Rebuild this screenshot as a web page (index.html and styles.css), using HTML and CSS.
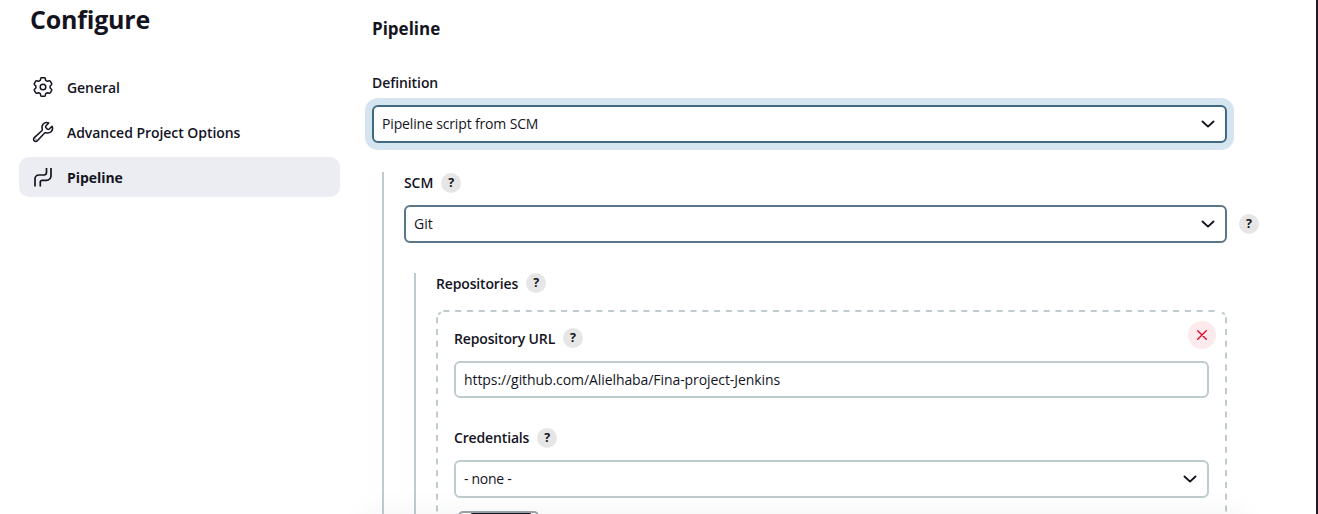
FILE: index.html
```html
<!DOCTYPE html>
<html lang="en">
<head>
<meta charset="utf-8">
<title>Configure</title>
<link rel="stylesheet" href="styles.css">
</head>
<body>
<div class="page">
  <aside class="sidebar">
    <h1 class="title">Configure</h1>
    <nav class="tasks">
      <a class="task">
        <svg class="icon" viewBox="-10 -10 20 20"><path class="gear" d="M-1.5-9.2H1.5Q2.1-9.2 2.3-8.5L2.7-6.7 4.4-5.7 6.2-6.3Q6.9-6.4 7.2-5.9L8.7-3.3Q9-2.7 8.5-2.3L7.1-1V1L8.5 2.3Q9 2.7 8.7 3.3L7.2 5.9Q6.9 6.4 6.2 6.3L4.4 5.7 2.7 6.7 2.3 8.5Q2.1 9.2 1.5 9.2H-1.5Q-2.1 9.2-2.3 8.5L-2.7 6.7-4.4 5.7-6.2 6.3Q-6.9 6.4-7.2 5.9L-8.7 3.3Q-9 2.7-8.5 2.3L-7.1 1V-1L-8.5-2.3Q-9-2.7-8.7-3.3L-7.2-5.9Q-6.9-6.4-6.2-6.3L-4.4-5.7-2.7-6.7-2.3-8.5Q-2.1-9.2-1.5-9.2Z"/><circle class="gear" r="2.8"/></svg>
        <span>General</span>
      </a>
      <a class="task">
        <svg class="icon" viewBox="36 36 440 440"><path d="M393.87 190a32.1 32.1 0 01-45.25 0l-26.57-26.57a32.09 32.09 0 010-45.26L382.19 58a1 1 0 00-.3-1.64c-38.82-16.64-89.15-8.16-121.11 23.57-30.58 30.35-32.32 76-21.12 115.84a31.93 31.93 0 01-9.06 32.08L64 380a48.17 48.17 0 1068 68l153.86-167a31.93 31.93 0 0131.6-9.13c39.54 10.59 84.54 8.6 114.72-21.19 32.49-32 39.5-88.56 23.75-120.93a1 1 0 00-1.6-.26z"/><circle cx="96" cy="416" r="3"/></svg>
        <span>Advanced Project Options</span>
      </a>
      <a class="task active">
        <svg class="icon" viewBox="0 0 20 20"><path class="pipe" d="M2 19.5V12A4 4 0 0 1 6 8H10.8A2.7 2.7 0 0 0 13.5 5.3V1M7.3 19.5V15A1.7 1.7 0 0 1 9 13.3H13.5A4.5 4.5 0 0 0 18 8.8V1"/></svg>
        <span>Pipeline</span>
      </a>
    </nav>
  </aside>
  <main class="content">
    <h2 class="section">Pipeline</h2>
    <div class="label def-label"><span>Definition</span></div>
    <div class="field select focused"><span>Pipeline script from SCM</span><svg class="chevron" viewBox="0 0 14 8"><path d="M1.5 1.5 7 6.6 12.5 1.5"/></svg></div>
    <section class="nested scm">
      <div class="label"><span>SCM</span><span class="help">?</span></div>
      <div class="select-row">
        <div class="field select strong"><span>Git</span><svg class="chevron" viewBox="0 0 14 8"><path d="M1.5 1.5 7 6.6 12.5 1.5"/></svg></div>
        <span class="help">?</span>
      </div>
      <section class="nested repos">
        <div class="label low tight"><span>Repositories</span><span class="help">?</span></div>
        <div class="chunk">
          <svg class="dashes" viewBox="0 0 791 320"><path class="run" d="M7.4 1H784M1 7.3V320M790 7.3V320"/><path d="M2.3 4.6 4.8 2.2M788.7 4.6 786.2 2.2"/></svg>
          <div class="chunk-head">
            <div class="label low tight"><span>Repository URL</span><span class="help">?</span></div>
            <span class="delete"><svg viewBox="0 0 10 10"><path d="M.7.7l8.6 8.6M9.3.7.7 9.3"/></svg></span>
          </div>
          <div class="field input"><span>https://github.com/Alielhaba/Fina-project-Jenkins</span></div>
          <div class="label cred-label tight"><span>Credentials</span><span class="help">?</span></div>
          <div class="field select none"><span>- none -</span><svg class="chevron" viewBox="0 0 14 8"><path d="M1.5 1.5 7 6.6 12.5 1.5"/></svg></div>
          <div class="add"><div class="add-inner"></div></div>
        </div>
      </section>
    </section>
  </main>
  <div class="edge"></div>
  <div class="shade"></div>
</div>
</body>
</html>
```
FILE: styles.css
```css
* { box-sizing: border-box; }
body { margin: 0; overflow: hidden; background: #fff; color: #14141f; font: 14px/20px "Open Sans", "Noto Sans", sans-serif; }
.page { position: relative; display: flex; height: 514px; overflow: hidden; }
.page span { white-space: nowrap; }
.sidebar { width: 340px; padding-left: 19px; flex: none; }
.title { margin: 0; padding: 3px 0 0 11px; font-size: 25px; line-height: 32px; font-weight: 700; letter-spacing: -.2px; }
.tasks { display: flex; flex-direction: column; gap: 5px; margin-top: 32px; }
.task { display: flex; align-items: center; gap: 14px; height: 40px; padding-left: 14px; border-radius: 10px; font-weight: 600; letter-spacing: -.05px; }
.task span { padding-top: 2px; }
.active { background: #ecedf3; font-weight: 700; }
.icon { width: 20px; height: 20px; flex: none; fill: none; stroke: #14141f; stroke-width: 33; stroke-linejoin: round; stroke-linecap: round; overflow: visible; }
.pipe { stroke-width: 1.7; stroke-linecap: butt; }
.gear { stroke-width: 1.5; }
.content { width: 887px; flex: none; padding-left: 32px; }
.section { margin: 0; padding-top: 18px; font-size: 17px; line-height: 22px; font-weight: 700; }
.label { display: flex; align-items: center; gap: 8px; height: 20px; font-weight: 600; letter-spacing: -.08px; }
.tight { letter-spacing: -.15px; }
.low span:first-child { padding-top: 2px; }
.def-label { margin: 33px 0 12px; }
.field { display: flex; align-items: center; justify-content: space-between; height: 38px; border: 2px solid #bfcbcf; border-radius: 6px; padding: 0 10px 0 8px; background: #fff; letter-spacing: -.15px; }
.focused { border-color: #3f6a82; box-shadow: 0 0 0 7px #d4e5ef; }
.strong { border-color: #597789; flex: none; width: 823px; letter-spacing: 0; }
.none { letter-spacing: -.3px; }
.input { height: 37px; letter-spacing: -.08px; }
.chevron { width: 14px; height: 8px; fill: none; stroke: #14141f; stroke-width: 1.9; stroke-linecap: round; stroke-linejoin: round; }
.help { display: flex; align-items: center; justify-content: center; width: 20px; height: 20px; flex: none; border-radius: 50%; background: #e6e6e6; font-size: 12.5px; font-weight: 700; line-height: 20px; letter-spacing: 0; }
.nested { border-left: 2px solid #bfcbcf; padding-left: 20px; }
.scm { margin: 29px 0 0 10px; padding-top: 1px; height: 400px; }
.select-row { display: flex; align-items: center; gap: 12px; margin-top: 12px; }
.repos { margin: 30px 0 0 10px; height: 350px; }
.chunk { position: relative; margin-top: 17px; height: 320px; padding: 11px 18px; }
.dashes { position: absolute; left: 0; top: 0; width: 791px; height: 320px; fill: none; stroke: #bfcbcf; stroke-width: 2; }
.run { stroke-dasharray: 6 5.77; }
.chunk-head { display: flex; justify-content: space-between; height: 28px; margin-right: -7px; }
.chunk-head .label { margin-top: 7px; }
.delete { display: flex; align-items: center; justify-content: center; width: 28px; height: 28px; border-radius: 50%; background: #fdeaec; }
.delete svg { width: 10px; height: 10px; fill: none; stroke: #e6001f; stroke-width: 1.3; stroke-linecap: round; }
.chunk .input { margin-top: 12px; }
.cred-label { margin: 30px 0 12px; }
.add { width: 81px; height: 38px; margin: 13px 0 0 4px; border: 2px solid #9aa5ac; border-radius: 5px; display: flex; justify-content: center; }
.add-inner { width: 62px; height: 34px; margin-left: 4px; background: #14141f; border-radius: 3px; }
.edge { width: 2px; margin-left: auto; background: #211725; }
.shade { position: absolute; left: 366px; right: 76px; bottom: -18px; height: 18px; box-shadow: 0 0 26px 5px rgba(0, 0, 0, .04); }
```
